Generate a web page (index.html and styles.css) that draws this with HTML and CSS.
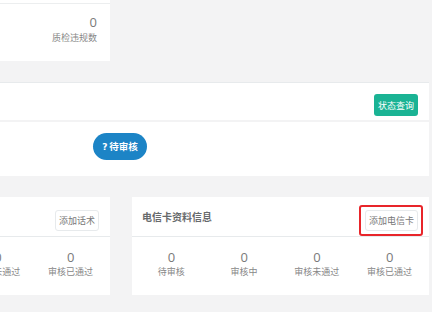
FILE: index.html
```html
<!DOCTYPE html>
<html lang="zh-CN">
<head>
  <meta charset="UTF-8">
  <meta name="viewport" content="width=device-width, initial-scale=1.0">
  <title>资料审核</title>
  <link rel="stylesheet" href="styles.css">
</head>
<body>
  <div class="wrap">
    <div class="row">
      <div class="stat-card">
        <div class="stat-body">
          <div class="num">0</div>
          <div class="label">质检违规数</div>
        </div>
      </div>
    </div>

    <div class="panel">
      <div class="panel-head">
        <button class="btn-green">状态查询</button>
      </div>
      <div class="panel-body">
        <span class="pill"><b class="q">?</b>待审核</span>
      </div>
    </div>

    <div class="row cards">
      <div class="card">
        <div class="card-head">
          <span class="card-title">话术资料信息</span>
          <button class="btn-white">添加话术</button>
        </div>
        <div class="stats">
          <div><div class="num">0</div><div class="label">待审核</div></div>
          <div><div class="num">0</div><div class="label">审核中</div></div>
          <div><div class="num">0</div><div class="label">审核未通过</div></div>
          <div><div class="num">0</div><div class="label">审核已通过</div></div>
        </div>
      </div>
      <div class="card">
        <div class="card-head">
          <span class="card-title">电信卡资料信息</span>
          <span class="marked"><button class="btn-white">添加电信卡</button></span>
        </div>
        <div class="stats">
          <div><div class="num">0</div><div class="label">待审核</div></div>
          <div><div class="num">0</div><div class="label">审核中</div></div>
          <div><div class="num">0</div><div class="label">审核未通过</div></div>
          <div><div class="num">0</div><div class="label">审核已通过</div></div>
        </div>
      </div>
    </div>
  </div>
</body>
</html>
```

FILE: styles.css
```css
body {
  margin: 0;
  background: #f3f3f4;
  font-family: "Open Sans", "Noto Sans CJK SC", sans-serif;
  color: #676a6c;
  overflow: hidden;
}
.wrap {
  margin-left: -187px;
  width: 616px;
}
.row {
  display: flex;
  gap: 22px;
}
.stat-card {
  width: 297px;
  height: 61px;
  box-sizing: border-box;
  padding-top: 3px;
  background: #fff;
}
.stat-body {
  border-top: 1px solid #eceeef;
  text-align: right;
  padding: 10px 13px 0;
}
.num {
  font-size: 13px;
  line-height: 16px;
  color: #7a7a7a;
}
.label {
  font-size: 9px;
  line-height: 12px;
  margin-top: 2px;
  color: #888;
}
.panel {
  margin-top: 21px;
  border-top: 1px solid #e7eaec;
}
.panel-head {
  height: 37px;
  box-sizing: border-box;
  background: #fff;
  display: flex;
  justify-content: flex-end;
  align-items: flex-end;
  padding: 0 11px 4px;
}
.btn-green {
  height: 22px;
  padding: 0 4px;
  border: none;
  border-radius: 3px;
  background: #1ab394;
  color: #fff;
  font-family: inherit;
  font-size: 9px;
}
.panel-body {
  margin-top: 2px;
  height: 54px;
  box-sizing: border-box;
  background: #fff;
  padding: 11px 0 0 280px;
}
.pill {
  display: inline-block;
  width: 54px;
  height: 27px;
  line-height: 27px;
  border-radius: 14px;
  background: #1c84c6;
  color: #fff;
  font-size: 9.5px;
  font-weight: bold;
  text-align: center;
}
.q {
  font-family: "DejaVu Sans", sans-serif;
  font-size: 9px;
  margin-right: 2px;
}
.cards {
  margin-top: 21px;
}
.card {
  width: 297px;
  height: 98px;
  background: #fff;
}
.card-head {
  height: 40px;
  box-sizing: border-box;
  border-bottom: 1px solid #e7eaec;
  display: flex;
  justify-content: space-between;
  align-items: flex-start;
  padding: 13px 11px 0 10px;
}
.card-title {
  font-size: 10px;
  font-weight: 600;
  line-height: 14px;
}
.btn-white {
  display: block;
  height: 21px;
  padding: 0 3px;
  border: 1px solid #e7eaec;
  border-radius: 3px;
  background: #fff;
  color: #777;
  font-family: inherit;
  font-size: 9px;
}
.marked {
  margin: -5px -5px 0 0;
  padding: 3px 3px 3px 4px;
  border: 2px solid #e8252a;
  border-radius: 3px;
}
.stats {
  display: grid;
  grid-template-columns: repeat(4, 1fr);
  padding: 12px 3px 0;
  text-align: center;
}
.stats .label {
  margin-top: 1px;
}
```
